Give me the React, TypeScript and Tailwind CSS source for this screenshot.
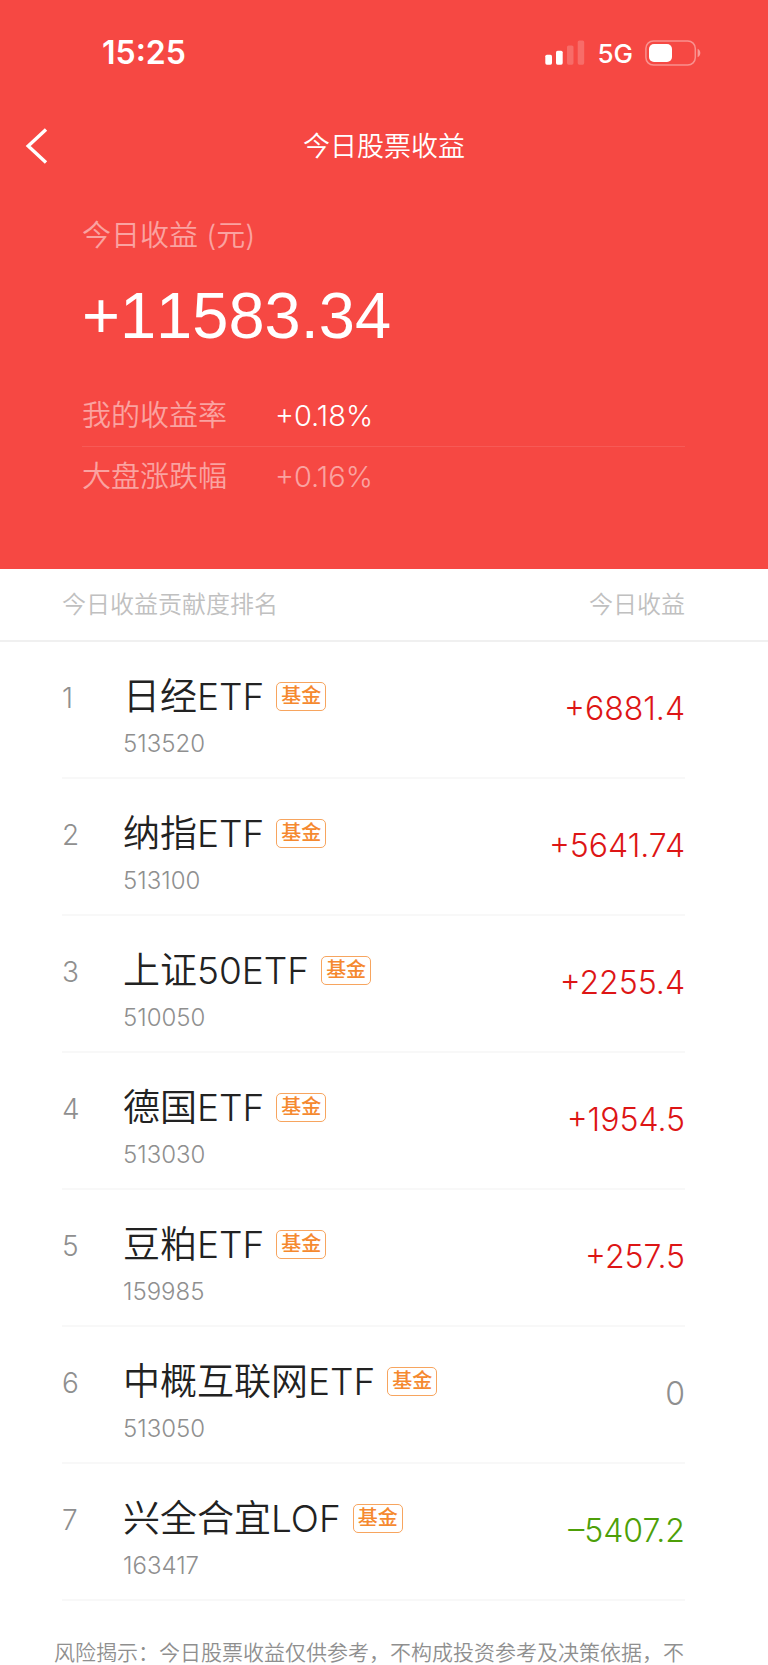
import clsx from "clsx"

type Holding = {
  name: string
  code: string
  profit: string
}

const holdings: Holding[] = [
  { name: "日经ETF", code: "513520", profit: "+6881.4" },
  { name: "纳指ETF", code: "513100", profit: "+5641.74" },
  { name: "上证50ETF", code: "510050", profit: "+2255.4" },
  { name: "德国ETF", code: "513030", profit: "+1954.5" },
  { name: "豆粕ETF", code: "159985", profit: "+257.5" },
  { name: "中概互联网ETF", code: "513050", profit: "0" },
  { name: "兴全合宜LOF", code: "163417", profit: "–5407.2" },
]

function StatusBar() {
  return (
    <div className="flex h-26 items-center justify-between pt-px pr-[67px] pl-[102px]">
      <span className="text-[32px] leading-10 font-semibold">15:25</span>
      <div className="flex items-center">
        <svg className="h-[25px] w-10" viewBox="0 0 40 25" fill="#fff" aria-hidden="true">
          <rect x="0.3" y="14.7" width="6.7" height="10" rx="1.6" />
          <rect x="11" y="10.7" width="6.7" height="14" rx="1.6" />
          <rect x="22" y="5.5" width="6.5" height="19.2" rx="1.6" opacity="0.2" />
          <rect x="32.7" y="0.4" width="6.5" height="24.3" rx="1.6" opacity="0.2" />
        </svg>
        <span className="ml-3 pt-0.5 text-[26px] leading-8 font-medium">5G</span>
        <svg className="ml-3 h-[26px] w-14" viewBox="0 0 56 26" fill="none" aria-hidden="true">
          <rect x="0.9" y="0.9" width="49.4" height="24.2" rx="7.6" stroke="#fff" strokeOpacity="0.4" strokeWidth="1.5" />
          <rect x="4" y="4" width="23" height="18" rx="5" fill="#fff" />
          <path d="M52.6 8.8c1.8.9 2.7 2.4 2.7 4.2s-.9 3.3-2.7 4.2z" fill="#fff" fillOpacity="0.45" />
        </svg>
      </div>
    </div>
  )
}

function NavBar() {
  return (
    <div className="grid h-21 grid-cols-[80px_1fr_80px] items-center">
      <button type="button" aria-label="返回" className="flex h-full items-center pl-6">
        <svg className="h-9 w-6" viewBox="0 0 24 36" fill="none" stroke="#fff" strokeWidth="3.4" aria-hidden="true">
          <path d="M22 1.5 4.2 18 22 34.5" />
        </svg>
      </button>
      <h1 className="pt-0.5 text-center text-[27px] leading-9 font-[350]">今日股票收益</h1>
    </div>
  )
}

function Summary() {
  return (
    <section className="pt-6 pr-[83px] pb-[62px] pl-[82px] font-[350]">
      <p className="text-[29px] leading-12 text-white/50">今日收益 (元)</p>
      <p className="pt-3.5 pb-4 font-['Liberation_Sans',sans-serif] text-[65px] leading-[84px] [font-kerning:none]">
        +11583.34
      </p>
      <dl className="pt-3 text-[29px] leading-[60px]">
        <div className="flex border-b border-white/10">
          <dt className="w-[193px] text-white/50">我的收益率</dt>
          <dd>+0.18%</dd>
        </div>
        <div className="flex text-white/50">
          <dt className="w-[193px]">大盘涨跌幅</dt>
          <dd>+0.16%</dd>
        </div>
      </dl>
    </section>
  )
}

function HoldingRow({ holding, rank }: { holding: Holding; rank: number }) {
  const { name, code, profit } = holding
  return (
    <tr className="flex h-[137px] items-center border-b-2 border-[#f8f8f8] font-[350]">
      <td className="w-[61px] pb-6 text-[28px] leading-10 text-[#8f8f8f]">{rank}</td>
      <td className="flex-1 pt-[18px]">
        <div className="flex items-center">
          <span className="text-[37px] leading-[50px] text-[#222]">{name}</span>
          <span className="ml-3 rounded-[5px] border-[1px] border-[#f7a55f] px-1 text-[20px] leading-[27px] font-medium text-[#f5892f]">
            基金
          </span>
        </div>
        <div className="text-2xl leading-11 text-[#8f8f8f]">{code}</div>
      </td>
      <td
        className={clsx(
          "pb-0.5 text-right text-[32px] leading-10",
          profit.startsWith("+") && "text-[#dd1515]",
          profit.startsWith("–") && "text-[#4d9f08]",
          profit === "0" && "text-[#8f8f8f]",
        )}
      >
        {profit}
      </td>
    </tr>
  )
}

export default function App() {
  return (
    <div className="bg-white font-['Inter','Noto_Sans_CJK_SC',sans-serif]">
      <header className="bg-[#f64843] text-white">
        <StatusBar />
        <NavBar />
        <Summary />
      </header>

      <main>
        <table className="block">
          <thead className="block border-b-2 border-[#f0f0f0] pr-[83px] pl-[62px]">
            <tr className="flex justify-between text-2xl leading-[71px] text-[#c0c0c0]">
              <th className="font-[350]">今日收益贡献度排名</th>
              <th className="font-[350]">今日收益</th>
            </tr>
          </thead>
          <tbody className="block pr-[83px] pl-[62px]">
            {holdings.map((holding, index) => (
              <HoldingRow key={holding.code} holding={holding} rank={index + 1} />
            ))}
          </tbody>
        </table>
        <p className="pt-[38px] pr-16 pl-[54px] text-[21px] leading-7 font-[350] text-[#8f8f8f]">
          风险揭示：今日股票收益仅供参考，不构成投资参考及决策依据，不
        </p>
      </main>
    </div>
  )
}
